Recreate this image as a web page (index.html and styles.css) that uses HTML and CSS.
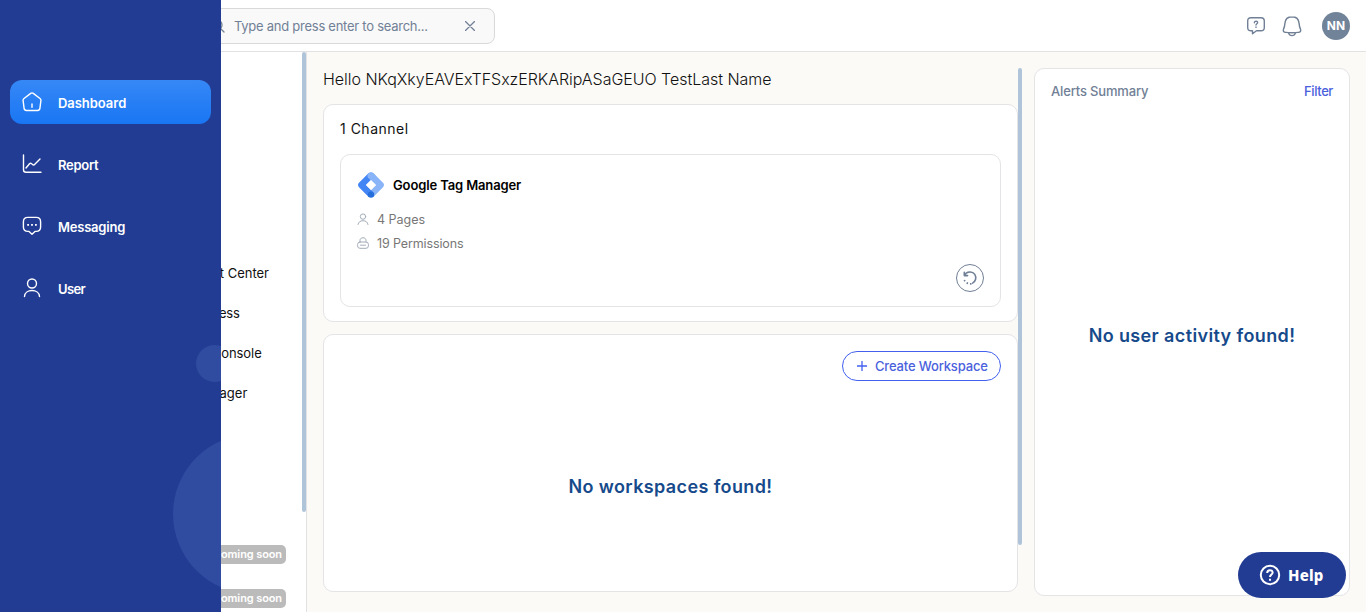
FILE: index.html
```html
<!DOCTYPE html>
<html lang="en">
<head>
<meta charset="utf-8">
<title>Dashboard</title>
<link rel="stylesheet" href="styles.css">
</head>
<body>
<div class="app">
  <header class="topbar">
    <div class="search">
      <svg class="search-icon" width="14" height="14" viewBox="0 0 14 14"><circle cx="6" cy="6" r="5"/><path d="M10 10l3 3"/></svg>
      <span class="search-text">Type and press enter to search...</span>
      <svg class="search-close" width="10" height="10" viewBox="0 0 10 10"><path d="M.5.5l9 9M9.5.5l-9 9"/></svg>
    </div>
    <div class="actions">
      <svg width="20" height="20" viewBox="0 0 20 20"><path d="M5 1.7H15Q18.3 1.7 18.3 5V11.5Q18.3 14.8 15 14.8H10.5L6.5 17.8V14.8H5Q1.7 14.8 1.7 11.5V5Q1.7 1.7 5 1.7Z"/><path d="M8.4 6.8C8.4 4.6 11.8 4.7 11.6 6.8C11.5 7.8 10 7.9 10 9.1M10 11V11.4"/></svg>
      <svg class="bell" width="20" height="22" viewBox="0 0 20 22"><path d="M10 1.7C5.7 1.7 3.2 4.6 2.9 8.4C2.7 11.2 2.5 12 1.6 13.9C.7 15.8 1.7 17.2 3.6 17.4Q10 18 16.4 17.4C18.3 17.2 19.3 15.8 18.4 13.9C17.5 12 17.3 11.2 17.1 8.4C16.8 4.6 14.3 1.7 10 1.7Z"/><path d="M6.6 17.8Q7.3 20.6 10 20.6T13.4 17.8"/></svg>
      <span class="avatar">NN</span>
    </div>
  </header>
  <div class="body">
    <aside class="panel">
      <ul class="channels">
        <li class="c1">Google Merchant Center</li>
        <li class="c2">Google My Business</li>
        <li class="c3">Google Search Console</li>
        <li class="c4">Google Tag Manager</li>
      </ul>
      <div class="soon-list"><span class="soon">Coming soon</span><span class="soon">Coming soon</span></div>
      <div class="thumb"></div>
    </aside>
    <main class="main">
      <h1 class="hello">Hello NKqXkyEAVExTFSxzERKARipASaGEUO TestLast Name</h1>
      <section class="card channel-card">
        <h2 class="count">1 Channel</h2>
        <div class="channel">
          <div class="channel-head">
            <svg width="26" height="26" viewBox="0 0 26 26"><path d="M15.3 1L25 10.8Q27 13 25 15.2L15.3 25L10.8 20.3L18 13L10.8 5.8Z" fill="#8ab4f8"/><path d="M10.7 1L1 10.8Q-1 13 1 15.2L10.7 25L15.3 20.3L8 13L15.3 5.8Z" fill="#4285f4"/><path d="M10.7 1Q13-1 15.3 1L18 4V13L9.8 5.4Q8.8 3 10.7 1Z" fill="#8ab4f8"/><circle cx="13" cy="22.6" r="3.2" fill="#246fdb"/><path d="M13 8l5 5l-5 5l-5-5z" fill="#fff"/></svg>
            <span>Google Tag Manager</span>
          </div>
          <div class="meta"><svg width="12" height="12" viewBox="0 0 12 12"><circle cx="6" cy="3.6" r="2.7"/><path d="M1 11.5Q1.8 7.7 6 7.7T11 11.5"/></svg><span class="pages">4 Pages</span></div>
          <div class="meta"><svg width="12" height="12" viewBox="0 0 12 12"><path d="M3 5V3.3C3-.1 9-.1 9 3.3V5"/><rect x=".6" y="5" width="10.8" height="6.3" rx="2.4"/><path d="M3.5 8.2h5"/></svg><span class="permissions">19 Permissions</span></div>
          <button class="refresh"><svg width="16" height="16" viewBox="0 0 16 16"><path d="M2.3 2.2V5.6H5.6M2.7 5.3C4.4 1.3 10.4.8 12.8 4.4C14.9 7.8 13.4 11.5 10.6 13.1"/><path class="trail" d="M9.6 13.7Q6.5 14.3 4.2 12.4T1.9 8.3"/></svg></button>
        </div>
      </section>
      <section class="card workspace">
        <button class="create"><svg width="10" height="10" viewBox="0 0 10 10"><path d="M5 0V10M0 5H10"/></svg><span>Create Workspace</span></button>
        <p class="empty workspace-empty">No workspaces found!</p>
      </section>
      <div class="thumb main-thumb"></div>
    </main>
    <aside class="card alerts">
      <div class="alerts-head"><span class="alerts-title">Alerts Summary</span><a class="filter">Filter</a></div>
      <p class="empty activity-empty">No user activity found!</p>
    </aside>
  </div>
  <nav class="sidebar">
    <span class="bubble small"></span><span class="bubble large"></span>
    <a class="nav active"><svg width="20" height="20" viewBox="0 0 20 20"><path d="M8.7 1.4Q10 .4 11.3 1.4L18 6.5Q19.1 7.4 18.9 8.7L17.9 16.4Q17.6 18.5 15.5 18.5H4.5Q2.4 18.5 2.1 16.4L1.1 8.7Q.9 7.4 2 6.5ZM10 12V15.3"/></svg><span class="n1">Dashboard</span></a>
    <a class="nav"><svg width="20" height="20" viewBox="0 0 20 20"><path d="M1.5 1V15.8Q1.5 18.3 4 18.3H19M4 14L7.5 9.7Q8.5 8.7 9.6 9.7Q11.3 12 12.8 10.2L18 5"/></svg><span class="n2">Report</span></a>
    <a class="nav"><svg width="20" height="20" viewBox="0 0 20 20"><path d="M5.8 1.4H14.2Q18.6 1.4 18.6 5.8V11Q18.6 15.4 14.2 15.4H13L10 18.2L7 15.4H5.8Q1.4 15.4 1.4 11V5.8Q1.4 1.4 5.8 1.4Z"/><path class="dots" d="M5.2 8.8h1.8M9.1 8.8h1.8M13 8.8h1.8"/></svg><span class="n3">Messaging</span></a>
    <a class="nav"><svg width="20" height="20" viewBox="0 0 20 20"><circle cx="10" cy="5.5" r="4.5"/><path d="M2.5 18.5C2.8 10.4 17.2 10.4 17.5 18.5"/></svg><span class="n4">User</span></a>
  </nav>
  <button class="help"><svg width="22" height="22" viewBox="0 0 22 22"><circle cx="11" cy="11" r="9.2"/><path d="M8.2 9C8.2 5.1 13.8 5.3 13.6 8.8C13.5 10.5 11 10.7 11 13M11 14.8V16.7"/></svg><span>Help</span></button>
</div>
</body>
</html>
```

FILE: styles.css
```css
* { box-sizing: border-box; }
body, h1, h2, p, ul { margin: 0; padding: 0; }
body { font-family: Inter, sans-serif; color: #111; overflow: hidden; }
button { font: inherit; padding: 0; }
svg { display: block; flex: none; fill: none; stroke-linecap: round; stroke-linejoin: round; }
span, a, li, h1, h2, p { white-space: nowrap; }
.app { position: relative; height: 612px; display: flex; flex-direction: column; background: #fbfaf6; overflow: hidden; }
.topbar { height: 52px; flex: none; display: flex; align-items: center; justify-content: space-between; padding: 0 16px 0 200px; background: #fff; border-bottom: 1px solid #e2e2e5; }
.search { width: 295px; height: 36px; display: flex; align-items: center; padding: 0 19px 0 10px; border: 1px solid #d9d9d9; border-radius: 8px; background: #f9f9f9; color: #718096; font-size: 13px; letter-spacing: -0.26px; }
.search svg { stroke: #718096; stroke-width: 1.3; }
.search-text { flex: 1; margin-left: 9px; }
.actions { display: flex; align-items: center; }
.actions svg { stroke: #718096; stroke-width: 1.4; }
.actions .bell { margin-left: 16px; }
.avatar { width: 28px; height: 28px; margin-left: 20px; border-radius: 50%; background: #718399; color: #fff; font-size: 12px; font-weight: 700; line-height: 28px; text-align: center; }
.body { flex: 1; min-height: 0; display: flex; }
.panel { position: relative; width: 307px; flex: none; background: #fff; border-right: 1px solid #e2e2e5; }
.channels { list-style: none; padding: 202px 0 0 118px; font-size: 13px; }
.channels li { height: 40px; line-height: 39px; }
.c2 { letter-spacing: -0.22px; }
.c3 { letter-spacing: -0.05px; }
.c4 { letter-spacing: 0.05px; }
.soon-list { display: flex; flex-direction: column; align-items: flex-end; gap: 25px; padding: 131px 20px 0 0; }
.soon { height: 19px; padding: 0 4px; border-radius: 5px; background: #bbb; color: #fff; font-size: 11px; font-weight: 600; letter-spacing: -0.1px; line-height: 19px; }
.thumb { position: absolute; right: 0; top: 0; width: 4px; height: 460px; border-radius: 2px; background: #b0c4d9; }
.main { position: relative; width: 715px; flex: none; padding: 16px 4px 0 16px; }
.main-thumb { top: 16px; height: 477px; }
.hello { height: 36px; font-size: 16px; font-weight: 300; letter-spacing: -0.03px; line-height: 23px; }
.card { border: 1px solid #e4e4e7; border-radius: 10px; background: #fff; }
.channel-card { height: 218px; padding: 16px 16px 0; }
.count { height: 33px; font-size: 14px; font-weight: 400; letter-spacing: 0.5px; line-height: 16px; }
.channel { height: 153px; padding: 17px 16px 0; display: flex; flex-direction: column; border: 1px solid #e4e4e7; border-radius: 10px; }
.channel-head { display: flex; align-items: center; gap: 9px; height: 26px; margin: 0 0 9px 1px; color: #000; font-size: 13px; font-weight: 600; letter-spacing: -0.13px; }
.meta { height: 24px; display: flex; align-items: center; gap: 8px; color: #777; font-size: 12.5px; letter-spacing: -0.12px; }
.pages { letter-spacing: 0; }
.meta svg { stroke: #a3adb9; stroke-width: 1; }
.refresh { width: 28px; height: 28px; align-self: flex-end; margin-top: 9px; display: flex; align-items: center; justify-content: center; border: 1px solid #718096; border-radius: 50%; background: #fff; }
.refresh svg { stroke: #718096; stroke-width: 1.6; }
.trail { stroke-dasharray: 1.6 2; stroke-linecap: butt; }
.workspace { height: 258px; margin-top: 12px; padding: 16px; display: flex; flex-direction: column; align-items: center; }
.create { width: 159px; height: 30px; align-self: flex-end; display: flex; align-items: center; padding-left: 14px; gap: 8px; border: 1px solid #4361ee; border-radius: 15px; background: #fff; color: #4a61dd; font-size: 13px; font-weight: 500; letter-spacing: -0.16px; }
.create svg { stroke: #4361ee; stroke-width: 1.3; }
.empty { color: #164a8b; font-size: 18px; font-weight: 600; letter-spacing: 0.38px; text-align: center; }
.workspace-empty { margin-top: 95px; }
.alerts { width: 316px; height: 528px; margin: 16px 0 0 12px; padding: 14px 16px 0; }
.alerts-head { display: flex; justify-content: space-between; font-size: 13px; font-weight: 500; letter-spacing: -0.16px; line-height: 17px; color: #718096; }
.filter { color: #4a61dd; letter-spacing: -0.4px; }
.activity-empty { margin-top: 225px; }
.sidebar { position: absolute; left: 0; top: 0; width: 221px; height: 612px; padding: 80px 10px 0; display: flex; flex-direction: column; gap: 18px; background: #223c93; overflow: hidden; }
.bubble { position: absolute; border-radius: 50%; background: #304ca1; }
.small { left: 196px; top: 345px; width: 37px; height: 37px; }
.large { left: 173px; top: 434px; width: 160px; height: 160px; }
.nav { height: 44px; display: flex; align-items: center; gap: 16px; padding-left: 12px; border-radius: 12px; color: #fff; font-size: 13px; font-weight: 600; }
.nav svg { stroke: #fff; stroke-width: 1.4; }
.nav span { padding-top: 1px; }
.nav .dots { stroke-width: 1.8; stroke-linecap: butt; }
.n1 { letter-spacing: -0.04px; }
.n2 { letter-spacing: -0.28px; }
.n3 { letter-spacing: -0.22px; }
.n4 { letter-spacing: -0.65px; }
.active { background: linear-gradient(#3688f6, #1976f3); }
.help { position: absolute; right: 20px; bottom: 14px; width: 108px; height: 46px; display: flex; align-items: center; gap: 7px; padding-left: 21px; border: 0; border-radius: 23px; background: #223c93; color: #fff; font: 800 15px "Noto Sans", sans-serif; letter-spacing: 0.2px; }
.help svg { stroke: #fff; stroke-width: 2; stroke-linecap: butt; }
```
